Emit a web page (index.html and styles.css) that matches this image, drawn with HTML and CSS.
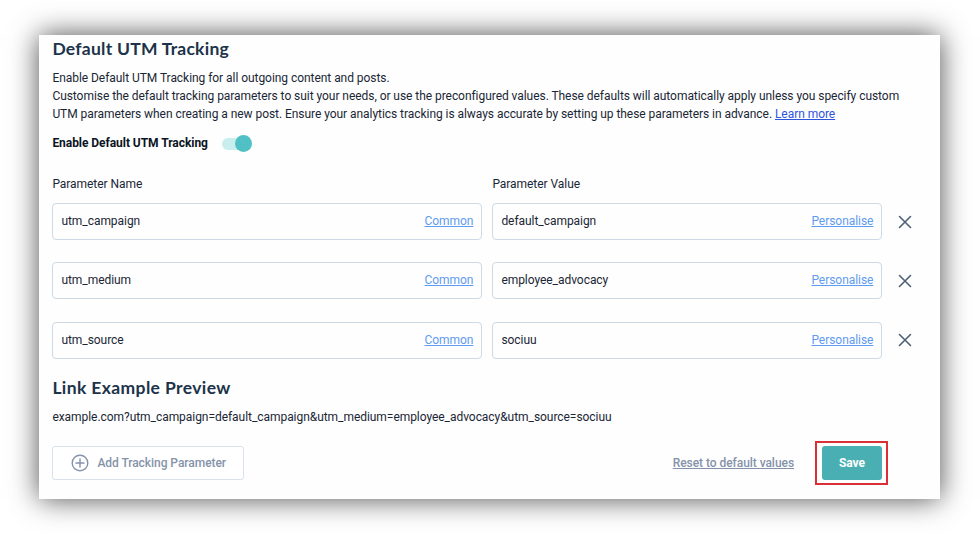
FILE: index.html
```html
<!DOCTYPE html>
<html lang="en">

<head>
    <meta charset="UTF-8">
    <meta name="viewport" content="width=device-width, initial-scale=1.0">
    <title>Default UTM Tracking</title>
    <link rel="stylesheet" href="styles.css">
</head>

<body>
    <section class="utm-card">
        <h2>Default UTM Tracking</h2>
        <p class="description">
            Enable Default UTM Tracking for all outgoing content and posts.<br>
            Customise the default tracking parameters to suit your needs, or use the preconfigured values. These defaults will automatically apply unless you specify custom<br>
            UTM parameters when creating a new post. Ensure your analytics tracking is always accurate by setting up these parameters in advance. <a href="#" class="learn-more">Learn more</a>
        </p>
        <div class="toggle-row">
            <span class="toggle-label">Enable Default UTM Tracking</span>
            <span class="toggle"><span class="toggle-knob"></span></span>
        </div>

        <div class="param-grid param-head">
            <span>Parameter Name</span>
            <span>Parameter Value</span>
        </div>
        <div class="param-rows">
            <div class="param-grid">
                <div class="field"><span>utm_campaign</span><a href="#">Common</a></div>
                <div class="field"><span>default_campaign</span><a href="#">Personalise</a></div>
                <svg class="remove" viewBox="0 0 14 14"><path d="M1.5 1.5l11 11M12.5 1.5l-11 11" /></svg>
            </div>
            <div class="param-grid">
                <div class="field"><span>utm_medium</span><a href="#">Common</a></div>
                <div class="field"><span>employee_advocacy</span><a href="#">Personalise</a></div>
                <svg class="remove" viewBox="0 0 14 14"><path d="M1.5 1.5l11 11M12.5 1.5l-11 11" /></svg>
            </div>
            <div class="param-grid">
                <div class="field"><span>utm_source</span><a href="#">Common</a></div>
                <div class="field"><span>sociuu</span><a href="#">Personalise</a></div>
                <svg class="remove" viewBox="0 0 14 14"><path d="M1.5 1.5l11 11M12.5 1.5l-11 11" /></svg>
            </div>
        </div>

        <h2 class="preview-title">Link Example Preview</h2>
        <p class="preview-link">example.com?utm_campaign=default_campaign&amp;utm_medium=employee_advocacy&amp;utm_source=sociuu</p>

        <div class="actions">
            <button type="button" class="add-button">
                <svg class="plus" viewBox="0 0 18 18">
                    <circle cx="9" cy="9" r="7.8" />
                    <path d="M9 5v8M5 9h8" />
                </svg>
                <span>Add Tracking Parameter</span>
            </button>
            <a href="#" class="reset">Reset to default values</a>
            <div class="save-highlight">
                <button type="button" class="save-button">Save</button>
            </div>
        </div>
    </section>
</body>

</html>
```
FILE: styles.css
```css
* {
    box-sizing: border-box;
}

body {
    margin: 0;
    padding: 35px 40px 35px 39px;
    background: #fff;
    color: #1a2635;
    font-family: Roboto, "Liberation Sans", sans-serif;
    font-size: 12px;
    line-height: 18px;
    letter-spacing: -0.05px;
}

.utm-card {
    height: 464px;
    padding: 3px 13.4px 0;
    background: #fefefe;
    box-shadow: 0 0 27px rgba(0, 0, 0, 0.7);
    white-space: nowrap;
    overflow: hidden;
}

h2 {
    margin: 0;
    font-family: Lato, "Open Sans", sans-serif;
    font-size: 17.5px;
    font-weight: 700;
    line-height: 22px;
    letter-spacing: 0.25px;
    color: #1c3349;
}

p {
    margin: 0;
}

.description {
    margin-top: 9px;
}

.learn-more {
    color: #2d55dc;
}

.toggle-row {
    display: flex;
    align-items: center;
    gap: 14px;
    height: 20px;
    margin-top: 10px;
}

.toggle-label {
    font-weight: 700;
    color: #0b1422;
}

.toggle {
    display: flex;
    align-items: center;
    justify-content: flex-end;
    width: 30px;
    height: 12px;
    margin-top: 1px;
    border-radius: 6px;
    background: #c9eeee;
}

.toggle-knob {
    width: 17px;
    height: 17px;
    border-radius: 50%;
    background: #50c0c5;
}

/* name column, value column, remove icon */
.param-grid {
    display: grid;
    grid-template-columns: 430px 390px 14px;
    column-gap: 10px;
    align-items: center;
}

.param-head {
    margin-top: 22px;
}

.param-rows {
    display: flex;
    flex-direction: column;
    gap: 22.3px;
    margin-top: 10px;
}

.field {
    display: flex;
    justify-content: space-between;
    align-items: center;
    height: 37px;
    padding: 0 8px 1px;
    border: 1px solid #cdd9e5;
    border-radius: 4px;
}

.field a {
    color: #5f9bf0;
}

.remove {
    width: 14px;
    height: 14px;
    margin-left: 6px;
    fill: none;
    stroke: #4d6078;
    stroke-width: 1.6;
    stroke-linecap: round;
}

.preview-title {
    margin-top: 18px;
    letter-spacing: 0.38px;
}

.preview-link {
    margin-top: 9px;
}

.actions {
    display: flex;
    align-items: center;
    margin-top: 15px;
}

button {
    font-family: inherit;
    font-size: 12px;
    letter-spacing: inherit;
    cursor: pointer;
}

.add-button {
    display: flex;
    align-items: center;
    gap: 8px;
    width: 192px;
    height: 34px;
    padding: 0 0 0 18px;
    border: 1px solid #d9e2ec;
    border-radius: 3px;
    background: #fff;
    color: #8593aa;
    font-weight: 500;
}

.plus {
    width: 18px;
    height: 18px;
    fill: none;
    stroke: #8593aa;
    stroke-width: 1.4;
    stroke-linecap: round;
}

.reset {
    margin-left: auto;
    color: #8593aa;
    font-weight: 500;
}

.save-highlight {
    width: 73px;
    height: 44px;
    margin: 0 38.6px 0 21px;
    padding: 3px 5px;
    border: 2px solid #da2f35;
}

.save-button {
    display: block;
    width: 60px;
    height: 34px;
    border: 0;
    border-radius: 3px;
    background: #49afb3;
    color: #fff;
    font-weight: 700;
}
```
